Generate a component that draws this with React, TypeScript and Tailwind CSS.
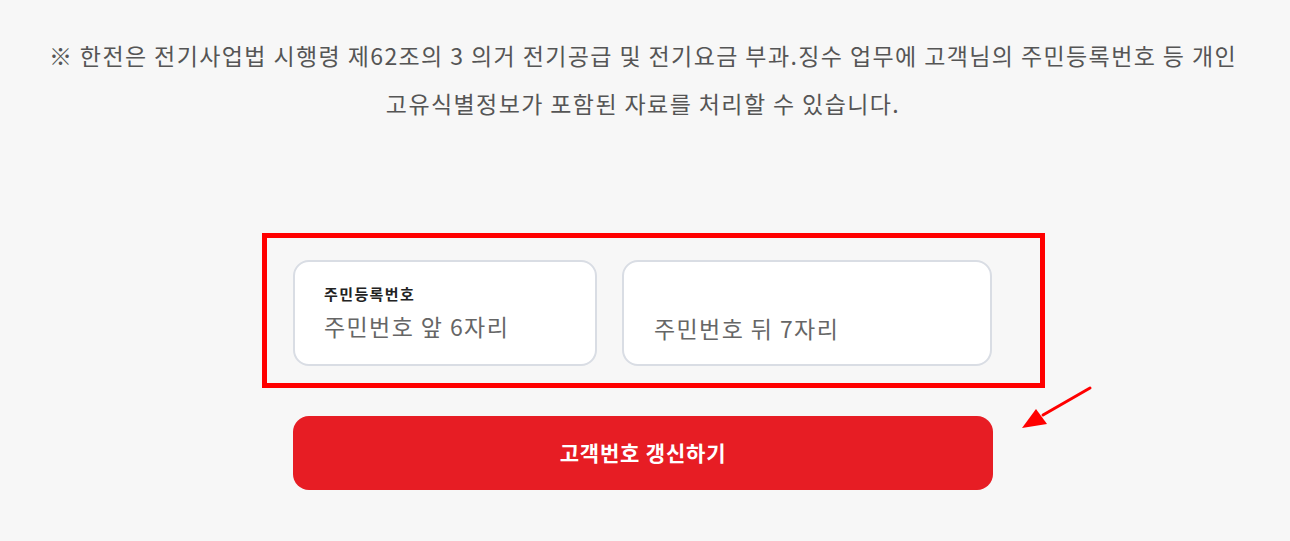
import React from "react";

const font = { fontFamily: '"Noto Sans CJK KR", "Noto Sans", sans-serif' };

const Arrow = () => (
  <svg
    className="absolute left-[722px] top-[-36px] pointer-events-none"
    width="80"
    height="50"
    viewBox="0 0 80 50"
  >
    {/* tail from (1090,388) to head at (1022,428); svg origin at (1015,380) */}
    <line x1="75" y1="8" x2="28" y2="35" stroke="#ff0000" strokeWidth="3" strokeLinecap="round" />
    <polygon points="7,48 21,29 32,44" fill="#ff0000" />
  </svg>
);

export default function App() {
  return (
    <div className="min-h-[541px] w-full bg-[#f7f7f7] pr-1" style={font}>
      <p className="pt-[31px] text-center text-[23px] leading-[48px] tracking-[1.4px] text-[#555555]">
        ※ 한전은 전기사업법 시행령 제62조의 3 의거 전기공급 및 전기요금 부과.징수 업무에 고객님의 주민등록번호 등 개인
        <br />
        고유식별정보가 포함된 자료를 처리할 수 있습니다.
      </p>

      <div className="mx-auto mt-[133px] w-[700px]">
        <div className="relative flex gap-[25px]">
          <div className="flex h-[106px] w-[304px] flex-col justify-center rounded-2xl border-2 border-[#d9dde4] bg-white px-[29px]">
            <span className="text-[15px] font-bold leading-[18px] tracking-[1.4px] text-[#222222]">주민등록번호</span>
            <span className="mt-[8px] text-[23px] leading-[30px] tracking-[1.4px] text-[#666666]">주민번호 앞 6자리</span>
          </div>
          <div className="flex h-[106px] w-[370px] flex-col justify-center rounded-2xl border-2 border-[#d9dde4] bg-white px-[30px]">
            <span className="h-[18px]" />
            <span className="mt-[11px] text-[23px] leading-[30px] tracking-[1.4px] text-[#666666]">주민번호 뒤 7자리</span>
          </div>
          {/* annotation frame */}
          <div className="pointer-events-none absolute -left-[31px] -top-[27px] h-[155px] w-[783px] border-[5px] border-[#ff0000]" />
          <div className="absolute left-0 top-[156px]">
            <Arrow />
          </div>
        </div>

        <button
          type="button"
          className="mt-[50px] flex h-[74px] w-[700px] items-center justify-center rounded-2xl bg-[#e71d24] text-[21px] font-bold tracking-[0.8px] text-white"
        >
          고객번호 갱신하기
        </button>
      </div>
    </div>
  );
}
